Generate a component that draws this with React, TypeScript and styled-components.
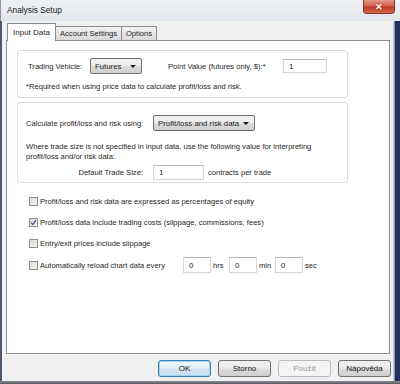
import React from "react";
import styled, { createGlobalStyle, css } from "styled-components";

const Global = createGlobalStyle`
  html, body { margin: 0; padding: 0; background: #f0f0f0; }
  * { box-sizing: border-box; }
`;

const Screen = styled.div`
  width: 400px;
  height: 384px;
  display: flex;
  flex-direction: column;
  overflow: hidden;
  background: #f0f0f0;
  font-family: "Liberation Sans", Arial, sans-serif;
  font-size: 7.6px;
  color: #262626;
`;

const TitleBar = styled.div`
  height: 21px;
  flex: none;
  display: flex;
  justify-content: space-between;
  align-items: flex-start;
  padding-left: 6px;
  background: linear-gradient(#eef1f4, #e2e6eb);
  border-left: 1px solid #8a93a3;
`;

const Title = styled.div`
  font-size: 8.3px;
  color: #1a1a1a;
  margin-top: 5px;
`;

const CloseButton = styled.div`
  width: 32px;
  height: 14px;
  margin-right: 5px;
  border: 1px solid #8a3328;
  border-top: none;
  border-radius: 0 0 4px 4px;
  background: linear-gradient(#e59a8c, #d2604f 45%, #c23a26 55%, #d46a50);
  color: #fff;
  font-weight: bold;
  font-size: 9px;
  display: flex;
  align-items: center;
  justify-content: center;
  text-shadow: 0 0 2px #6a1a10;
`;

const Body = styled.div`
  flex: 1;
  display: flex;
  min-height: 0;
`;

const Client = styled.div`
  flex: 1;
  display: flex;
  flex-direction: column;
  border-left: 2px solid #4d5870;
  padding: 2px 3px 0 4px;
  background: #f0f0f0;
`;

const RightFrame = styled.div`
  width: 7px;
  flex: none;
  background: linear-gradient(to right, #c3cad6 0 1px, #8d99b4 1px 2px, #22315f 2px);
`;

const BottomFrame = styled.div`
  height: 3px;
  flex: none;
  background: linear-gradient(#8b8e93, #55585d);
`;

const TabStrip = styled.div`
  height: 17px;
  display: flex;
  align-items: flex-end;
  padding-left: 1px;
`;

const Tab = styled.div<{ $active?: boolean; $w: number }>`
  width: ${(p) => p.$w}px;
  border: 1px solid #898c95;
  border-bottom: none;
  display: flex;
  align-items: center;
  justify-content: center;
  margin-left: -1px;
  ${(p) =>
    p.$active
      ? css`
          height: 18px;
          margin-bottom: -1px;
          margin-left: 0;
          background: #fff;
          position: relative;
          z-index: 1;
          font-size: 8px;
          padding-bottom: 1px;
        `
      : css`
          height: 14px;
          background: linear-gradient(#f3f3f3, #e6e6e6 50%, #dadada);
        `}
`;

const Panel = styled.div`
  width: 384px;
  height: 314px;
  border: 1px solid #898c95;
  background: #fff;
  padding: 9px 0 0 10px;
  display: flex;
  flex-direction: column;
`;

const Group = styled.div<{ $pt: number; $pb: number }>`
  width: 331px;
  border: 1px solid #d9dde2;
  border-radius: 3px;
  padding: ${(p) => p.$pt}px 8px ${(p) => p.$pb}px 8px;
  & + & {
    margin-top: 4px;
  }
`;

const Row = styled.div<{ $h: number; $indent?: number; $mt?: number }>`
  height: ${(p) => p.$h}px;
  display: flex;
  align-items: center;
  padding-left: ${(p) => p.$indent || 0}px;
  margin-top: ${(p) => p.$mt || 0}px;
`;

const Label = styled.span<{ $w?: number; $right?: boolean; $pl?: number; $ml?: number }>`
  flex: none;
  white-space: nowrap;
  ${(p) => (p.$w ? `width: ${p.$w}px;` : "")}
  ${(p) => (p.$right ? "text-align: right; padding-right: 10px;" : "")}
  padding-left: ${(p) => p.$pl || 0}px;
  margin-left: ${(p) => p.$ml || 0}px;
`;

const Note = styled.div<{ $mt: number }>`
  margin-top: ${(p) => p.$mt}px;
  line-height: 10px;
  white-space: nowrap;
`;

const Select = styled.div<{ $w: number }>`
  width: ${(p) => p.$w}px;
  height: 16px;
  flex: none;
  border: 1px solid #707070;
  border-radius: 2px;
  background: linear-gradient(#f2f2f2, #ebebeb 48%, #dddddd 52%, #cfcfcf);
  display: flex;
  align-items: center;
  justify-content: space-between;
  padding: 0 5px 0 4px;
  font-size: 7.8px;
`;

const Arrow = styled.span`
  width: 0;
  height: 0;
  border-left: 3px solid transparent;
  border-right: 3px solid transparent;
  border-top: 3px solid #1a1a1a;
`;

const TextBox = styled.div<{ $w: number; $h: number }>`
  width: ${(p) => p.$w}px;
  height: ${(p) => p.$h}px;
  flex: none;
  border: 1px solid #d3d7dd;
  border-top-color: #b3b6bc;
  background: #fff;
  display: flex;
  align-items: center;
  padding-left: 5px;
  font-size: 7.8px;
`;

const Checks = styled.div`
  margin-top: 10px;
  padding-left: 12px;
  display: flex;
  flex-direction: column;
  gap: 5px;
`;

const CheckRow = styled.div<{ $extra?: number }>`
  height: 16px;
  display: flex;
  align-items: center;
  margin-top: ${(p) => p.$extra || 0}px;
`;

const Box = styled.span`
  width: 9px;
  height: 9px;
  flex: none;
  margin-right: 2px;
  border: 1px solid #8e8f8f;
  background: linear-gradient(135deg, #d8d8d8, #f6f6f6);
  display: flex;
  align-items: center;
  justify-content: center;
`;

const Unit = styled.span`
  width: 18px;
  flex: none;
  padding-left: 2px;
`;

const Footer = styled.div`
  display: flex;
  justify-content: flex-end;
  gap: 7px;
  margin-top: 6px;
  margin-right: -1px;
`;

const Button = styled.div<{ $variant?: "default" | "disabled" }>`
  width: 53px;
  height: 17px;
  border: 1px solid #707070;
  border-radius: 3px;
  background: linear-gradient(#f2f2f2, #ebebeb 48%, #dddddd 52%, #cfcfcf);
  display: flex;
  align-items: center;
  justify-content: center;
  font-size: 8px;
  color: #111;
  ${(p) =>
    p.$variant === "default" &&
    css`
      border-color: #3c7fb1;
      box-shadow: inset 0 0 0 1px #9fd3f3;
      background: linear-gradient(#eef6fc, #e2eef8 48%, #d2e4f3 52%, #c6dcee);
    `}
  ${(p) =>
    p.$variant === "disabled" &&
    css`
      border-color: #b7bbbe;
      background: #f4f4f4;
      color: #9a9a9a;
    `}
`;

const Check = () => (
  <svg width="7" height="7" viewBox="0 0 7 7">
    <path d="M1 3.6 L2.8 5.4 L6 1.2" fill="none" stroke="#4a5f97" strokeWidth="1.3" />
  </svg>
);

export default function App() {
  return (
    <Screen>
      <Global />
      <TitleBar>
        <Title>Analysis Setup</Title>
        <CloseButton>✕</CloseButton>
      </TitleBar>
      <Body>
        <Client>
          <TabStrip>
            <Tab $active $w={49}>Input Data</Tab>
            <Tab $w={67}>Account Settings</Tab>
            <Tab $w={36}>Options</Tab>
          </TabStrip>
          <Panel>
            <Group $pt={7} $pb={5}>
              <Row $h={16} $indent={2}>
                <Label $w={62}>Trading Vehicle:</Label>
                <Select $w={52}>
                  Futures <Arrow />
                </Select>
                <Label $w={141} $pl={26}>Point Value (futures only, $):*</Label>
                <TextBox $w={44} $h={14}>1</TextBox>
              </Row>
              <Note $mt={8}>*Required when using price data to calculate profit/loss and risk.</Note>
            </Group>
            <Group $pt={12} $pb={2}>
              <Row $h={16}>
                <Label $w={127}>Calculate profit/loss and risk using:</Label>
                <Select $w={102}>
                  Profit/loss and risk data <Arrow />
                </Select>
              </Row>
              <Note $mt={11}>
                Where trade size is not specified in input data, use the following value for interpreting
                <br />
                profit/loss and/or risk data:
              </Note>
              <Row $h={15} $mt={3}>
                <Label $w={127} $right>Default Trade Size:</Label>
                <TextBox $w={51} $h={15}>1</TextBox>
                <Label $ml={4}>contracts per trade</Label>
              </Row>
            </Group>
            <Checks>
              <CheckRow>
                <Box />
                <Label>Profit/loss and risk data are expressed as percentages of equity</Label>
              </CheckRow>
              <CheckRow>
                <Box>
                  <Check />
                </Box>
                <Label>Profit/loss data include trading costs (slippage, commissions, fees)</Label>
              </CheckRow>
              <CheckRow>
                <Box />
                <Label>Entry/exit prices include slippage</Label>
              </CheckRow>
              <CheckRow $extra={1}>
                <Box />
                <Label $w={143}>Automatically reload chart data every</Label>
                <TextBox $w={28} $h={16}>0</TextBox>
                <Unit>hrs</Unit>
                <TextBox $w={28} $h={16}>0</TextBox>
                <Unit>min</Unit>
                <TextBox $w={28} $h={16}>0</TextBox>
                <Unit>sec</Unit>
              </CheckRow>
            </Checks>
          </Panel>
          <Footer>
            <Button $variant="default">OK</Button>
            <Button>Storno</Button>
            <Button $variant="disabled">Použít</Button>
            <Button>Nápověda</Button>
          </Footer>
        </Client>
        <RightFrame />
      </Body>
      <BottomFrame />
    </Screen>
  );
}
